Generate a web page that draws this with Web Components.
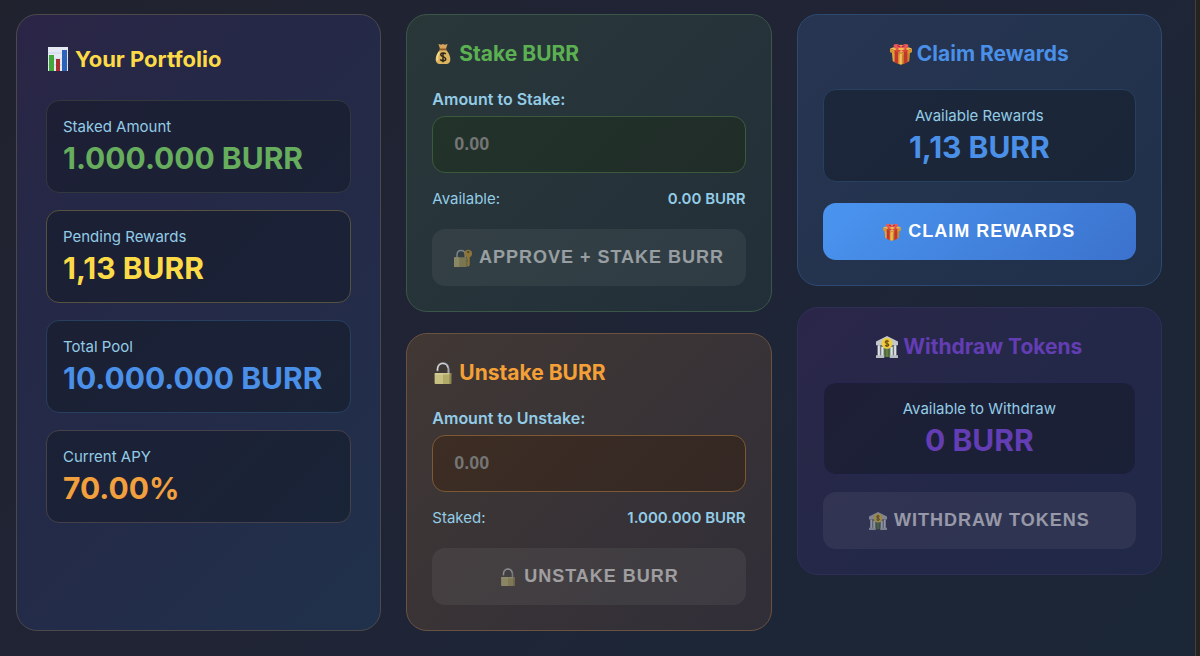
<!DOCTYPE html>
<html lang="en">
<head>
<meta charset="utf-8">
<meta name="viewport" content="width=device-width, initial-scale=1">
<title>BURR Staking</title>
<style>
    body {
        margin: 0;
        min-height: 100vh;
        background: #25231f;
        font-family: Inter, "Liberation Sans", sans-serif;
    }
</style>
</head>
<body>
<staking-dashboard>
    <panel-card slot="portfolio" theme="portfolio" icon="chart" heading="Your Portfolio">
        <stat-box tone="green" label="Staked Amount">1.000.000 BURR</stat-box>
        <stat-box tone="yellow" label="Pending Rewards">1,13 BURR</stat-box>
        <stat-box tone="blue" label="Total Pool">10.000.000 BURR</stat-box>
        <stat-box tone="orange" label="Current APY">70.00%</stat-box>
    </panel-card>

    <panel-card slot="actions" theme="stake" icon="moneybag" heading="Stake BURR">
        <amount-field label="Amount to Stake:" caption="Available:" balance="0.00 BURR"></amount-field>
        <action-button icon="lockkey" disabled>Approve + Stake BURR</action-button>
    </panel-card>
    <panel-card slot="actions" theme="unstake" icon="lock" heading="Unstake BURR">
        <amount-field label="Amount to Unstake:" caption="Staked:" balance="1.000.000 BURR"></amount-field>
        <action-button icon="lock" disabled>Unstake BURR</action-button>
    </panel-card>

    <panel-card slot="payouts" theme="claim" icon="gift" heading="Claim Rewards">
        <stat-box tone="blue" label="Available Rewards">1,13 BURR</stat-box>
        <action-button icon="gift">Claim Rewards</action-button>
    </panel-card>
    <panel-card slot="payouts" theme="withdraw" icon="bank" heading="Withdraw Tokens">
        <stat-box tone="purple" label="Available to Withdraw">0 BURR</stat-box>
        <action-button icon="bank" disabled>Withdraw Tokens</action-button>
    </panel-card>
</staking-dashboard>

<script>
// Small pictures used in headings and buttons
const icons = {
    chart: `
        <rect x="2" y="0" width="20" height="24" fill="#e4e9f4"/>
        <path d="M2 6h20M2 12h20M2 18h20" stroke="#cbd3e6" stroke-width="1"/>
        <rect x="3" y="8" width="5" height="16" fill="#43a63b"/>
        <rect x="10" y="12" width="4" height="12" fill="#a92f2f"/>
        <rect x="16" y="3" width="5" height="21" fill="#2c62b8"/>`,
    moneybag: `
        <path d="M7 1l3 1 2-1 2 1 3-1-2 6h-6z" fill="#d9a45a"/>
        <path d="M9 7h6c3 3 5 7 5 11 0 3-2 5-4 5H8c-2 0-4-2-4-5 0-4 2-8 5-11z" fill="#dcb45f"/>
        <path d="M8 10c-2 3-3 6-2 9" stroke="#f4d88e" stroke-width="2" fill="none"/>
        <path d="M8 7h8" stroke="#8c5a2b" stroke-width="2"/>
        <path d="M15 12c-1-1-5-2-5.500 .5S15 15 15 17.500s-4.500 2.500-6 .5M12 10v11" stroke="#2b2418" stroke-width="1.600" fill="none"/>`,
    lock: `
        <path d="M6 10V8c0-9 12-9 12 0v5" stroke="#9fa5ab" stroke-width="2.200" fill="none"/>
        <path d="M6 9V7c1-7 10-7 11-1" stroke="#e3e6e9" stroke-width="1" fill="none"/>
        <rect x="3" y="12" width="18" height="12" rx="1" fill="#b1a968"/>
        <rect x="3" y="12" width="9" height="12" rx="1" fill="#c6c083"/>
        <path d="M3 13h18" stroke="#dcd8a6" stroke-width="1"/>
        <path d="M20 12v12" stroke="#8c854f" stroke-width="2"/>`,
    lockkey: `
        <path d="M4 12V8c0-8 11-8 11 0v4" stroke="#b5b9be" stroke-width="2" fill="none"/>
        <rect x="0" y="11" width="17" height="13" rx="1" fill="#b3a45c"/>
        <rect x="0" y="11" width="7" height="13" rx="1" fill="#cfc283"/>
        <path d="M17 9h4v12l-2 3-2-2 1-2-1-1 1-2z" fill="#d9a130"/>
        <circle cx="19" cy="6" r="5" fill="#d9a130"/>
        <circle cx="19" cy="4" r="1.500" fill="#5a4728"/>`,
    gift: `
        <path d="M2 9l10 4v11L3 20z" fill="#e2a53b"/>
        <path d="M22 9l-10 4v11l9-4z" fill="#c98928"/>
        <path d="M0 6l12-4 12 4-12 5z" fill="#f0bb51"/>
        <path d="M0 6l12 5 12-5v4l-12 4L0 10z" fill="#d9962f"/>
        <path d="M5 8l4 2v13l-4-2zM15 10l4-2v13l-4 2z" fill="#c5352f"/>
        <path d="M4 5l5-2 11 5-4 2zM20 5l-5-2L5 8l4 2z" fill="#d8423c"/>
        <path d="M12 5C8 7 3 5 4 2c2-2 7-1 8 2 1-3 6-4 8-2 1 3-4 5-8 3z" fill="#e8595a"/>
        <path d="M8 3l3 1M16 3l-3 1" stroke="#a62228" stroke-width="1"/>
        <path d="M12 12v11" stroke="#f4cf73" stroke-width="1.500"/>`,
    bank: `
        <path d="M0 6L12 0l12 6v4H0z" fill="#c1c7cd"/>
        <path d="M2 10h20v12H2z" fill="#717b7d"/>
        <path d="M3 10v12M7 12v10M17 12v10M21 10v12" stroke="#dde1e3" stroke-width="2.400"/>
        <rect x="9" y="14" width="6" height="9" fill="#4c6b37"/>
        <path d="M12 14v9" stroke="#87975a" stroke-width="1"/>
        <path d="M0 21h9v3H0zM15 21h9v3h-9z" fill="#b8bec2"/>
        <circle cx="12" cy="8" r="6" fill="#efcd3f"/>
        <path d="M14 6c-1-1-4-1-4 .7S14 8 14 9.700 11 11.500 10 10M12 4v8" stroke="#6b4a12" stroke-width="1.200" fill="none"/>`
};

class BurrIcon extends HTMLElement {
    constructor() {
        super();
        this.attachShadow({ mode: 'open' });
    }

    connectedCallback() {
        this.shadowRoot.innerHTML = `
            <style>
                :host { display: block; flex: none; width: 22px; height: 22px; }
                svg { display: block; width: 100%; height: 100%; }
            </style>
            <svg viewBox="0 0 24 24" aria-hidden="true">${icons[this.getAttribute('name')]}</svg>`;
    }
}

class StatBox extends HTMLElement {
    constructor() {
        super();
        this.attachShadow({ mode: 'open' });
        this.shadowRoot.innerHTML = `
            <style>
                :host {
                    display: block;
                    padding: 16px;
                    border: 1px solid var(--box-line);
                    border-radius: 13px;
                    background: rgba(14, 20, 28, .4);
                }
                :host([tone="green"]) { --tone: #66ad5d; --box-line: #31393f; }
                :host([tone="yellow"]) { --tone: #fddb47; --box-line: #57513f; }
                :host([tone="blue"]) { --tone: #4a90e8; --box-line: #27405f; }
                :host([tone="orange"]) { --tone: #f2a03d; --box-line: #46404a; }
                :host([tone="purple"]) { --tone: #633db4; --box-line: #272652; }
                .label {
                    color: #93cce6;
                    font-size: 15px;
                    line-height: 20px;
                }
                .value {
                    margin-top: 3px;
                    color: var(--tone);
                    font-size: 30px;
                    font-weight: 700;
                    line-height: 36px;
                    white-space: nowrap;
                }
            </style>
            <div class="label"></div>
            <div class="value"><slot></slot></div>`;
    }

    connectedCallback() {
        this.shadowRoot.querySelector('.label').textContent = this.getAttribute('label');
    }
}

class AmountField extends HTMLElement {
    constructor() {
        super();
        this.attachShadow({ mode: 'open' });
        this.shadowRoot.innerHTML = `
            <style>
                :host { display: block; color: #93cce6; }
                label {
                    display: block;
                    margin-bottom: 7px;
                    font-size: 16px;
                    font-weight: 600;
                    line-height: 20px;
                }
                input {
                    display: block;
                    box-sizing: border-box;
                    width: 100%;
                    height: 57px;
                    padding: 0 21px;
                    border: 1px solid var(--field-line);
                    border-radius: 13px;
                    background: var(--field);
                    color: #fff;
                    font: bold 18px "Liberation Sans", Arial, sans-serif;
                    outline: none;
                }
                input::placeholder { color: #757575; opacity: 1; }
                .balance {
                    display: flex;
                    justify-content: space-between;
                    margin-top: 16px;
                    font-size: 15px;
                    line-height: 20px;
                }
                .balance strong { font-weight: 600; }
            </style>
            <label for="amount"></label>
            <input id="amount" type="text" inputmode="decimal" placeholder="0.00">
            <div class="balance"><span></span><strong></strong></div>`;
    }

    connectedCallback() {
        this.shadowRoot.querySelector('label').textContent = this.getAttribute('label');
        this.shadowRoot.querySelector('span').textContent = this.getAttribute('caption');
        this.shadowRoot.querySelector('strong').textContent = this.getAttribute('balance');
    }
}

class ActionButton extends HTMLElement {
    constructor() {
        super();
        this.attachShadow({ mode: 'open' });
    }

    connectedCallback() {
        this.shadowRoot.innerHTML = `
            <style>
                :host { display: block; }
                button {
                    display: flex;
                    align-items: center;
                    justify-content: center;
                    gap: 7px;
                    width: 100%;
                    height: 57px;
                    padding: 0;
                    border: 0;
                    border-radius: 13px;
                    background: linear-gradient(135deg, #4a95f0, #3b72cd);
                    color: #fff;
                    font: bold 18px "Liberation Sans", Arial, sans-serif;
                    letter-spacing: 1px;
                    text-transform: uppercase;
                    white-space: nowrap;
                    cursor: pointer;
                }
                button:disabled {
                    background: rgba(255, 255, 255, .06);
                    color: rgba(255, 255, 255, .5);
                    cursor: not-allowed;
                }
                burr-icon { width: 18px; height: 18px; }
                button:disabled burr-icon { opacity: .55; }
            </style>
            <button type="button">
                <burr-icon name="${this.getAttribute('icon')}"></burr-icon>
                <span><slot></slot></span>
            </button>`;
        this.shadowRoot.querySelector('button').disabled = this.hasAttribute('disabled');
    }
}

class PanelCard extends HTMLElement {
    constructor() {
        super();
        this.attachShadow({ mode: 'open' });
    }

    connectedCallback() {
        this.shadowRoot.innerHTML = `
            <style>
                :host {
                    display: block;
                    box-sizing: border-box;
                    padding: 25px;
                    border: 1px solid var(--line);
                    border-radius: 21px;
                    background: var(--surface);
                }
                :host([theme="portfolio"]) {
                    flex: 1;
                    padding: 29px;
                    --title: #fddb47;
                    --line: #4b494d;
                    --surface: linear-gradient(135deg, #2b2546, #252846 25%, #232b48 60%, #20314b);
                }
                :host([theme="stake"]) {
                    --title: #5bb152;
                    --line: #3a5648;
                    --surface: linear-gradient(135deg, #2a3739, #222f39);
                    --field: linear-gradient(135deg, #22332a, #202c28);
                    --field-line: #3b5a3d;
                }
                :host([theme="unstake"]) {
                    --title: #f5a037;
                    --line: #6a5240;
                    --surface: linear-gradient(135deg, #413834, #302e38);
                    --field: linear-gradient(135deg, #3d2d24, #342824);
                    --field-line: #7c5833;
                }
                :host([theme="claim"]) {
                    --title: #4a90e8;
                    --line: #2c4a72;
                    --surface: linear-gradient(135deg, #273552, #203049);
                }
                :host([theme="withdraw"]) {
                    --title: #633db4;
                    --line: #2f2e58;
                    --surface: linear-gradient(135deg, #2b2649, #252848 40%, #202848);
                }
                h2 {
                    display: flex;
                    align-items: center;
                    gap: 5px;
                    margin: 0 0 21px;
                    color: var(--title);
                    font-size: 21px;
                    font-weight: 700;
                    line-height: 28px;
                    white-space: nowrap;
                }
                .body { display: grid; gap: 20px; }
                :host([theme="portfolio"]) h2 { margin-bottom: 26px; font-size: 22px; line-height: 30px; }
                :host([theme="portfolio"]) burr-icon { width: 24px; height: 24px; }
                :host([theme="portfolio"]) .body { gap: 17px; }
                :host([theme="claim"]) .body { gap: 21px; }
                :host([theme="withdraw"]) .body { gap: 17px; }
                :host([theme="claim"]), :host([theme="withdraw"]) { text-align: center; }
                :host([theme="claim"]) h2, :host([theme="withdraw"]) h2 { justify-content: center; }
            </style>
            <h2><burr-icon name="${this.getAttribute('icon')}"></burr-icon><span>${this.getAttribute('heading')}</span></h2>
            <div class="body"><slot></slot></div>`;
    }
}

class StakingDashboard extends HTMLElement {
    constructor() {
        super();
        this.attachShadow({ mode: 'open' });
        this.shadowRoot.innerHTML = `
            <style>
                :host {
                    display: grid;
                    grid-template-columns: repeat(3, minmax(0, 1fr));
                    gap: 25px;
                    box-sizing: border-box;
                    min-height: 100vh;
                    margin-right: 4px;
                    padding: 14px 33px 25px 16px;
                    border-right: 1px solid #45402f;
                    background: linear-gradient(135deg, #20222e, #202435 45%, #1c2637 75%, #1b2637);
                }
                .column {
                    display: flex;
                    flex-direction: column;
                    gap: 21px;
                }
                @media (max-width: 900px) {
                    :host { grid-template-columns: minmax(0, 1fr); }
                }
            </style>
            <div class="column"><slot name="portfolio"></slot></div>
            <div class="column"><slot name="actions"></slot></div>
            <div class="column"><slot name="payouts"></slot></div>`;
    }
}

// Register every element used on the page
customElements.define('burr-icon', BurrIcon);
customElements.define('stat-box', StatBox);
customElements.define('amount-field', AmountField);
customElements.define('action-button', ActionButton);
customElements.define('panel-card', PanelCard);
customElements.define('staking-dashboard', StakingDashboard);
</script>
</body>
</html>
